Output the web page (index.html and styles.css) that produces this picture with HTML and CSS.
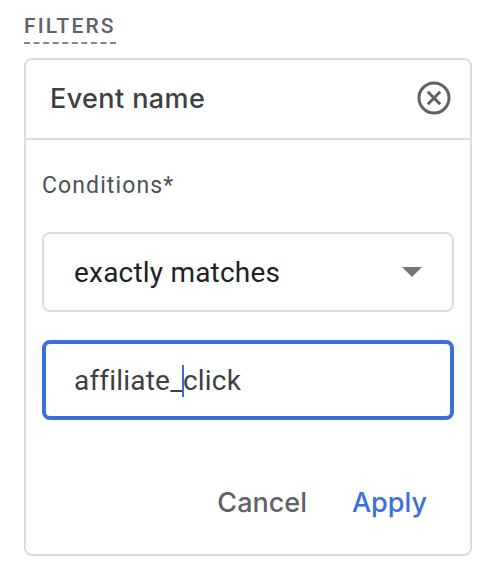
FILE: index.html
```html
<!DOCTYPE html>
<html lang="en">
<head>
<meta charset="utf-8">
<title>Filters</title>
<link rel="stylesheet" href="styles.css">
</head>
<body>
<main class="page">
  <h2 class="section-title"><span>FILTERS</span></h2>
  <section class="card">
    <header class="card-head">
      <h3 class="card-title">Event name</h3>
      <svg class="close-icon" viewBox="0 0 34 34" width="34" height="34" aria-hidden="true">
        <circle cx="17" cy="17" r="15" fill="none" stroke="#5f6368" stroke-width="3"/>
        <path d="M10.8 10.8 23.2 23.2M23.2 10.8 10.8 23.2" fill="none" stroke="#5f6368" stroke-width="3"/>
      </svg>
    </header>
    <div class="card-body">
      <div class="label">Conditions*</div>
      <div class="field select">
        <span>exactly matches</span>
        <svg class="caret" viewBox="0 0 20 10" width="20" height="10" aria-hidden="true"><path d="M0 0H20L10 10Z" fill="#757575"/></svg>
      </div>
      <div class="field input"><span class="value">affiliate_<span class="cursor"></span>click</span></div>
      <div class="actions">
        <span class="btn cancel">Cancel</span>
        <span class="btn apply">Apply</span>
      </div>
    </div>
  </section>
</main>
</body>
</html>
```
FILE: styles.css
```css
* { box-sizing: border-box; }
html, body { margin: 0; background: #fff; }
body { width: 490px; height: 568px; overflow: hidden; font-family: Roboto, "Liberation Sans", sans-serif; }
.page { padding: 14px 18px 13px 24px; }
.section-title { margin: 0 0 14px; font-size: 21px; line-height: 24px; font-weight: 500; letter-spacing: 2.1px; color: #5f6368; height: 30px; }
.section-title span { display: inline-block; height: 30px; border-bottom: 2px dashed #80868b; }
.card { height: 498px; border: 2px solid #dadce0; border-radius: 8px; display: flex; flex-direction: column; }
.card-head { height: 80px; flex: none; display: flex; align-items: center; justify-content: space-between; padding: 0 19px 0 24px; border-bottom: 2px solid #dadce0; }
.card-title { margin: 0; font-family: Inter, Roboto, sans-serif; font-size: 27px; line-height: 34px; font-weight: 450; letter-spacing: 0.4px; color: #3c4043; }
.close-icon { margin-bottom: 2px; }
.card-body { flex: 1; padding: 33px 16px 0; display: flex; flex-direction: column; }
.label { font-size: 23px; line-height: 26px; color: #4d5156; letter-spacing: 1.1px; margin-bottom: 33px; }
.field { height: 80px; border-radius: 8px; display: flex; align-items: center; font-size: 28px; letter-spacing: 0.2px; }
.select { border: 2px solid #dadce0; padding: 0 30px 0 30px; justify-content: space-between; color: #202124; margin-bottom: 28px; }
.input { border: 4px solid #3b6fde; padding: 0 28px; color: #3c4043; }
.value { position: relative; }
.cursor { display: inline-block; width: 2px; height: 32px; background: #3b6fde; vertical-align: -7px; margin: 0 -1px; }
.caret { flex: none; }
.actions { margin-top: auto; height: 108px; display: flex; align-items: flex-start; justify-content: flex-end; gap: 45px; padding: 40px 27px 0 0; }
.btn { font-family: Inter, Roboto, sans-serif; font-size: 27px; line-height: 34px; font-weight: 450; }
.cancel { color: #5f6368; }
.apply { color: #3b6fde; }
```
